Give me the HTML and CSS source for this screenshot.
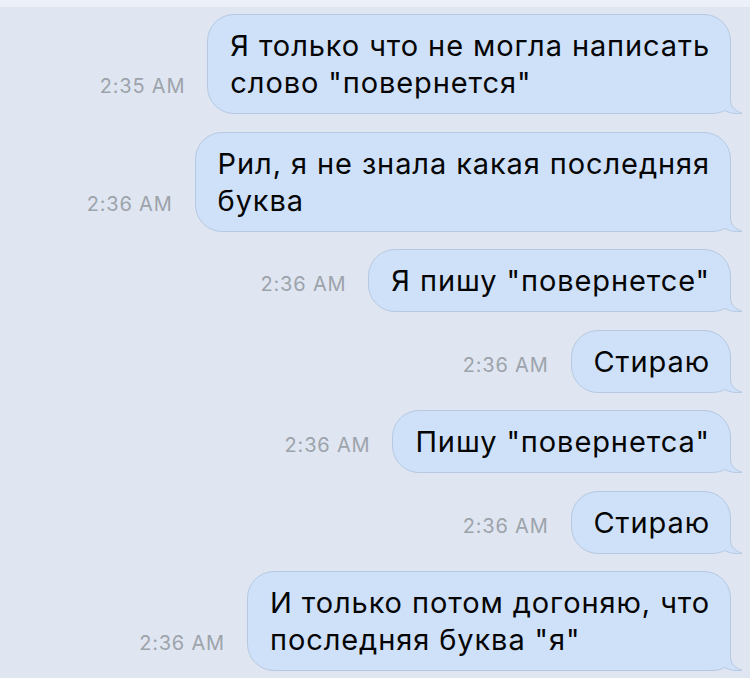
FILE: index.html
```html
<!DOCTYPE html>
<html lang="ru">
<head>
    <meta charset="UTF-8" />
    <title>Сообщения</title>
    <link rel="stylesheet" href="styles.css">
</head>
<body>
<div class="top-strip"></div>
<div class="chat">
    <div class="row">
        <span class="time">2:35 AM</span>
        <div class="bubble"><span class="msg">Я только что не могла написать<br>слово "повернется"</span><svg class="tail" width="42" height="28" viewBox="0 0 42 28"><path class="tail-fill" d="M0 0 H29.5 V14 C29.5 20 33 24.5 41 27.3 C35 28.3 28 27 23.5 24.5 C20 26.6 16 27.5 10 27.5 H0 Z"/><path class="tail-line" d="M29.5 0 V14 C29.5 20 33 24.5 41 27.3 C35 28.3 28 27 23.5 24.5 C20 26.6 16 27.5 10 27.5 H0"/></svg></div>
    </div>
    <div class="row">
        <span class="time">2:36 AM</span>
        <div class="bubble"><span class="msg">Рил, я не знала какая последняя<br>буква</span><svg class="tail" width="42" height="28" viewBox="0 0 42 28"><path class="tail-fill" d="M0 0 H29.5 V14 C29.5 20 33 24.5 41 27.3 C35 28.3 28 27 23.5 24.5 C20 26.6 16 27.5 10 27.5 H0 Z"/><path class="tail-line" d="M29.5 0 V14 C29.5 20 33 24.5 41 27.3 C35 28.3 28 27 23.5 24.5 C20 26.6 16 27.5 10 27.5 H0"/></svg></div>
    </div>
    <div class="row">
        <span class="time">2:36 AM</span>
        <div class="bubble"><span class="msg">Я пишу "повернетсе"</span><svg class="tail" width="42" height="28" viewBox="0 0 42 28"><path class="tail-fill" d="M0 0 H29.5 V14 C29.5 20 33 24.5 41 27.3 C35 28.3 28 27 23.5 24.5 C20 26.6 16 27.5 10 27.5 H0 Z"/><path class="tail-line" d="M29.5 0 V14 C29.5 20 33 24.5 41 27.3 C35 28.3 28 27 23.5 24.5 C20 26.6 16 27.5 10 27.5 H0"/></svg></div>
    </div>
    <div class="row">
        <span class="time">2:36 AM</span>
        <div class="bubble"><span class="msg">Стираю</span><svg class="tail" width="42" height="28" viewBox="0 0 42 28"><path class="tail-fill" d="M0 0 H29.5 V14 C29.5 20 33 24.5 41 27.3 C35 28.3 28 27 23.5 24.5 C20 26.6 16 27.5 10 27.5 H0 Z"/><path class="tail-line" d="M29.5 0 V14 C29.5 20 33 24.5 41 27.3 C35 28.3 28 27 23.5 24.5 C20 26.6 16 27.5 10 27.5 H0"/></svg></div>
    </div>
    <div class="row">
        <span class="time">2:36 AM</span>
        <div class="bubble"><span class="msg">Пишу "повернетса"</span><svg class="tail" width="42" height="28" viewBox="0 0 42 28"><path class="tail-fill" d="M0 0 H29.5 V14 C29.5 20 33 24.5 41 27.3 C35 28.3 28 27 23.5 24.5 C20 26.6 16 27.5 10 27.5 H0 Z"/><path class="tail-line" d="M29.5 0 V14 C29.5 20 33 24.5 41 27.3 C35 28.3 28 27 23.5 24.5 C20 26.6 16 27.5 10 27.5 H0"/></svg></div>
    </div>
    <div class="row">
        <span class="time">2:36 AM</span>
        <div class="bubble"><span class="msg">Стираю</span><svg class="tail" width="42" height="28" viewBox="0 0 42 28"><path class="tail-fill" d="M0 0 H29.5 V14 C29.5 20 33 24.5 41 27.3 C35 28.3 28 27 23.5 24.5 C20 26.6 16 27.5 10 27.5 H0 Z"/><path class="tail-line" d="M29.5 0 V14 C29.5 20 33 24.5 41 27.3 C35 28.3 28 27 23.5 24.5 C20 26.6 16 27.5 10 27.5 H0"/></svg></div>
    </div>
    <div class="row">
        <span class="time">2:36 AM</span>
        <div class="bubble"><span class="msg">И только потом догоняю, что<br>последняя буква "я"</span><svg class="tail" width="42" height="28" viewBox="0 0 42 28"><path class="tail-fill" d="M0 0 H29.5 V14 C29.5 20 33 24.5 41 27.3 C35 28.3 28 27 23.5 24.5 C20 26.6 16 27.5 10 27.5 H0 Z"/><path class="tail-line" d="M29.5 0 V14 C29.5 20 33 24.5 41 27.3 C35 28.3 28 27 23.5 24.5 C20 26.6 16 27.5 10 27.5 H0"/></svg></div>
    </div>
</div>
</body>
</html>
```

FILE: styles.css
```css
body {
    margin: 0;
    background: #dfe6f1;
    font-family: "Inter", "Noto Sans", sans-serif;
    overflow: hidden;
}
.top-strip {
    height: 7px;
    background: #ebf0f9;
}
.chat {
    display: flex;
    flex-direction: column;
    gap: 17.5px;
    padding: 7px 19px 0 0;
}
.row {
    display: flex;
    justify-content: flex-end;
    align-items: last baseline;
    gap: 22px;
}
.time {
    font-size: 20px;
    letter-spacing: 0.8px;
    color: #9da3ab;
    white-space: nowrap;
}
.bubble {
    position: relative;
    padding: 12px 20px 12px 22px;
    background: #cfe1f9;
    border: 1px solid #b6c9e2;
    border-radius: 27px;
    font-size: 29px;
    letter-spacing: 0.9px;
    line-height: 37px;
    color: #050505;
    white-space: nowrap;
}
.msg {
    position: relative;
    z-index: 1;
}
.tail {
    position: absolute;
    right: -13px;
    bottom: -1px;
    display: block;
}
.tail-fill {
    fill: #cfe1f9;
}
.tail-line {
    fill: none;
    stroke: #b6c9e2;
    stroke-width: 1;
}
```
